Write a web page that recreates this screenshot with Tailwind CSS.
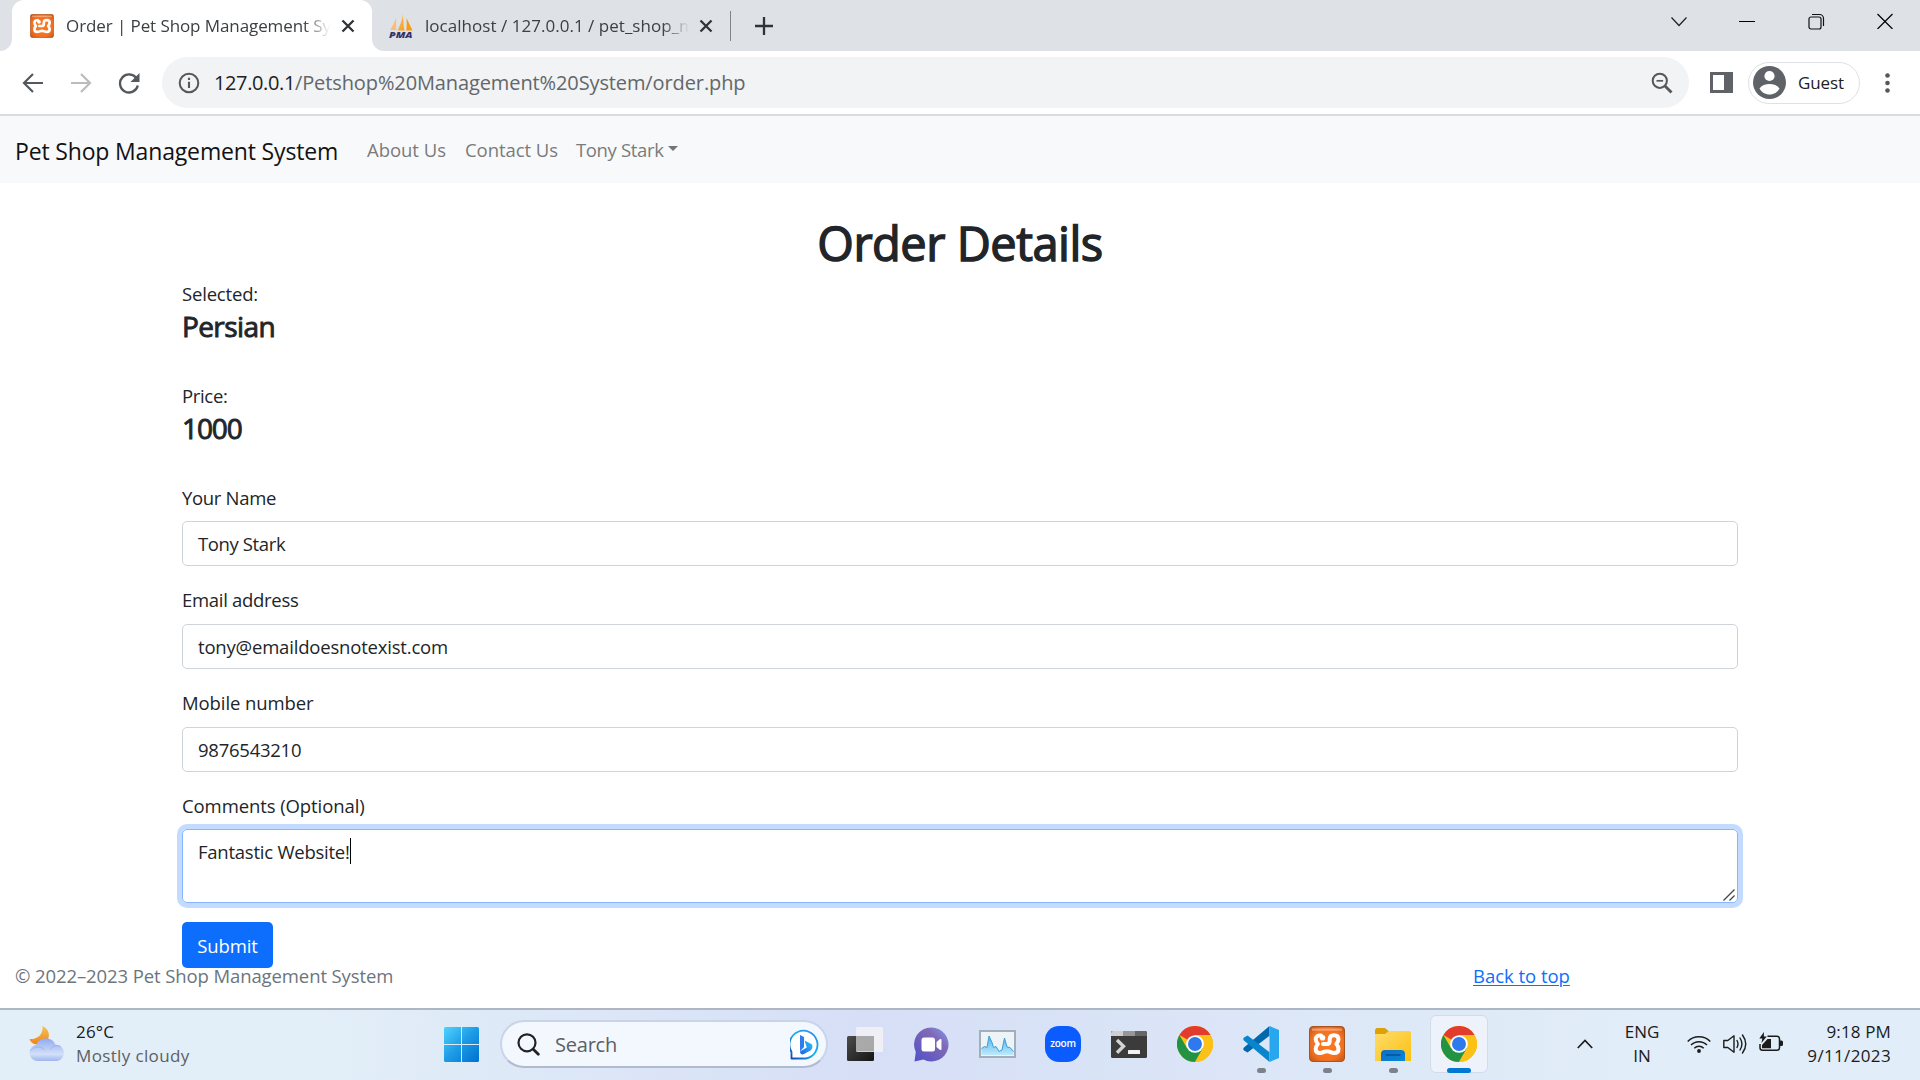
<!DOCTYPE html>
<html lang="en">
<head>
<meta charset="utf-8">
<title>Order | Pet Shop Management System</title>
<script src="https://cdn.jsdelivr.net/npm/@tailwindcss/browser@4"></script>
</head>
<body class="w-[1920px] h-[1080px] overflow-hidden bg-white text-[#212529] font-['Open_Sans','Noto_Sans',sans-serif]">
<svg class="absolute w-0 h-0">
  <defs>
    <linearGradient id="win" gradientUnits="userSpaceOnUse" x1="0" y1="0" x2="35" y2="35"><stop offset="0" stop-color="#4fd3fd"/><stop offset=".5" stop-color="#1c9be6"/><stop offset="1" stop-color="#0070cf"/></linearGradient>
    <linearGradient id="moon" x1="0" y1="0" x2="0" y2="1"><stop offset="0" stop-color="#f5c451"/><stop offset="1" stop-color="#f1821c"/></linearGradient>
    <linearGradient id="cloud" x1="0" y1="0" x2="0" y2="1"><stop offset="0" stop-color="#8faaf0"/><stop offset=".7" stop-color="#d3e0fa"/><stop offset="1" stop-color="#9eb5ee"/></linearGradient>
    <linearGradient id="bing" x1="1" y1="0" x2="0" y2="1"><stop offset="0" stop-color="#2a86ef"/><stop offset=".5" stop-color="#17b2ee"/><stop offset="1" stop-color="#153fb5"/></linearGradient>
    <linearGradient id="bingb" x1="1" y1="0" x2="0" y2="1"><stop offset="0" stop-color="#25c8f5"/><stop offset="1" stop-color="#2360e8"/></linearGradient>
    <linearGradient id="dark" x1="0" y1="0" x2="1" y2="1"><stop offset="0" stop-color="#4c4c4c"/><stop offset="1" stop-color="#151515"/></linearGradient>
    <linearGradient id="chat" x1="1" y1="0" x2="0" y2="1"><stop offset="0" stop-color="#7d9cf0"/><stop offset=".35" stop-color="#8068b4"/><stop offset="1" stop-color="#5050c8"/></linearGradient>
    <linearGradient id="fold" x1="0" y1="0" x2="1" y2="1"><stop offset="0" stop-color="#ffdd6c"/><stop offset="1" stop-color="#fbc011"/></linearGradient>
    <linearGradient id="blue" x1="0" y1="0" x2="1" y2="1"><stop offset="0" stop-color="#0c6fc4"/><stop offset="1" stop-color="#0a86d8"/></linearGradient>
    <radialGradient id="xam" cx=".5" cy=".5" r=".75"><stop offset="0" stop-color="#ff7a1e"/><stop offset=".6" stop-color="#f37021"/><stop offset="1" stop-color="#b24f14"/></radialGradient>
    <linearGradient id="sail" x1="0" y1="0" x2="1" y2="1"><stop offset="0" stop-color="#fbc27c"/><stop offset="1" stop-color="#f89c0e"/></linearGradient>
    <linearGradient id="perf" x1="0" y1="0" x2="0" y2="1"><stop offset="0" stop-color="#4eb5ec"/><stop offset="1" stop-color="#bfe8fb"/></linearGradient>
  </defs>
  <symbol id="xampp" viewBox="0 0 36 36">
    <rect x=".5" y=".5" width="35" height="35" rx="3.5" fill="url(#xam)" stroke="#a9541f"/>
    <path d="M3 2.500h30v2.200H3z" fill="#fff" opacity=".35"/>
    <path d="M12 9.500c-3.400-.6-5.300 1.300-5.300 3.800 0 2 .8 3.200 2.200 4.700-1.400 1.500-2.200 2.900-2.200 4.900 0 2.300 1.500 4 4.300 4 2.900 0 4-1.700 7-1.700s4.100 1.700 7 1.700c3 0 4.500-1.700 4.500-4 0-2-.8-3.400-2.200-4.900 1.400-1.500 2.200-2.700 2.200-4.700 0-2.300-1.500-4.100-4.500-4.100-2.700 0-4.300 1.500-4.300 4v1.800c0 1.800-1 3-2.600 3H14" fill="none" stroke="#fff" stroke-width="4" stroke-linecap="round" stroke-linejoin="round"/>
    <circle cx="13.500" cy="11.800" r="2.800" fill="#fff"/>
  </symbol>
  <symbol id="chrome" viewBox="0 0 48 48">
    <circle cx="24" cy="24" r="24" fill="#fbc116"/>
    <path d="M24 24 3.200 12A24 24 0 0 1 44.800 12H24z" fill="#e33b2e"/>
    <path d="M3.200 12A24 24 0 0 0 24 48L34.400 30 24 24 13.600 30z" fill="#229342"/>
    <path d="M24 48A24 24 0 0 0 44.800 12H24L34.400 30z" fill="#fbc116"/>
    <circle cx="24" cy="24" r="11.800" fill="#fff"/><circle cx="24" cy="24" r="9.300" fill="#2e79ee"/>
  </symbol>
</svg>

<!-- Browser tab strip -->
<div class="h-[51px] bg-[#dee1e6] flex items-stretch pl-3">
  <div class="relative w-[360px] bg-white rounded-t-xl flex items-center pl-[18px] pr-[17px]">
    <svg class="absolute -left-3 bottom-0 w-3 h-3" viewBox="0 0 12 12"><path d="M12 0v12H0A12 12 0 0 0 12 0z" fill="#fff"/></svg>
    <svg class="absolute -right-3 bottom-0 w-3 h-3" viewBox="0 0 12 12"><path d="M0 0v12h12A12 12 0 0 1 0 0z" fill="#fff"/></svg>
    <svg class="w-6 h-6 shrink-0"><use href="#xampp"/></svg>
    <span class="ml-3 w-[264px] shrink-0 overflow-hidden whitespace-nowrap text-[17px] tracking-[-0.09px] text-[#3c4043] mask-r-from-90% mask-r-to-100%">Order | Pet Shop Management System</span>
    <svg class="ml-[11px] w-[14px] h-[14px] shrink-0" viewBox="0 0 14 14"><path d="M1.500 1.500l11 11m0-11l-11 11" stroke="#303336" stroke-width="2.300"/></svg>
  </div>
  <div class="w-[358px] flex items-center pl-[17px]">
    <svg class="w-6 h-6 shrink-0 overflow-visible" viewBox="0 0 24 24"><path d="M7 3.500C5.500 9 3.500 12 1 16h6.500c-.9-4 0-8-.5-12.500z" fill="#fbbd76"/><path d="M13.500 0C14 5 11 11 8.500 16.500h7.200C13.800 12 15 5 13.500 0z" fill="url(#sail)"/><path d="M17.500 4c1.500 3 3.500 7.500 6 12.500h-6.300c.8-4.500.5-8 .3-12.500z" fill="#f89c0e"/><text x="0" y="23.600" textLength="23.500" lengthAdjust="spacingAndGlyphs" font-family="Open Sans" font-size="9.500" font-weight="800" font-style="italic" fill="#34346b">PMA</text></svg>
    <span class="ml-3 w-[264px] shrink-0 overflow-hidden whitespace-nowrap text-[17px] tracking-[0.03px] text-[#3c4043] mask-r-from-90% mask-r-to-100%">localhost / 127.0.0.1 / pet_shop_management</span>
    <svg class="ml-[10px] w-[14px] h-[14px] shrink-0" viewBox="0 0 14 14"><path d="M1.500 1.500l11 11m0-11l-11 11" stroke="#303336" stroke-width="2.300"/></svg>
  </div>
  <div class="flex items-center"><span class="w-px h-[30px] bg-[#80848a]"></span>
    <svg class="ml-6 w-[18px] h-[18px]" viewBox="0 0 18 18"><path d="M9 0v18M0 9h18" stroke="#303336" stroke-width="2.300"/></svg>
  </div>
  <div class="ml-auto flex items-start pt-[13px] pr-[27px] gap-[52.500px]">
    <svg class="w-4 h-4" viewBox="0 0 16 16"><path d="M.5 4.500L8 12.500l7.500-8" fill="none" stroke="#222" stroke-width="1.200"/></svg>
    <svg class="w-4 h-4" viewBox="0 0 16 16"><path d="M0 8.500h16" stroke="#000"/></svg>
    <svg class="w-[17px] h-[17px]" viewBox="0 0 17 17" fill="none" stroke="#111" stroke-width="1.200"><rect x="1" y="4" width="12" height="12" rx="2"/><path d="M4 1.500h7.500a4 4 0 0 1 4 4V13"/></svg>
    <svg class="w-4 h-4" viewBox="0 0 16 16"><path d="M.5 1l15 15m0-15l-15 15" stroke="#000" stroke-width="1.200"/></svg>
  </div>
</div>

<!-- Browser toolbar -->
<div class="h-[65px] bg-white border-b-2 border-[#dadce0] flex items-center pl-[22px] pr-[25px]">
  <svg class="w-[22px] h-[22px]" viewBox="0 0 22 22" fill="none" stroke="#54585d" stroke-width="2.200"><path d="M21 11H2.500M11 2l-9 9 9 9"/></svg>
  <svg class="ml-[26px] w-[22px] h-[22px]" viewBox="0 0 22 22" fill="none" stroke="#babcbe" stroke-width="2.200"><path d="M1 11h18.500M11 2l9 9-9 9"/></svg>
  <svg class="ml-[26px] w-[22px] h-[22px]" viewBox="0 0 22 22"><path d="M18.600 6.600A9 9 0 1 0 19.800 13.500" fill="none" stroke="#54585d" stroke-width="2.300"/><path d="M21.500 1v9h-9z" fill="#54585d"/></svg>
  <div class="ml-[22px] w-[1527px] h-[51px] rounded-full bg-[#f1f3f4] flex items-center pl-4 pr-4">
    <svg class="w-[22px] h-[22px]" viewBox="0 0 22 22"><circle cx="11" cy="11" r="9.300" fill="none" stroke="#54585d" stroke-width="2"/><path d="M11 9.700v6.300M11 5.800v2.100" stroke="#54585d" stroke-width="2.100"/></svg>
    <span class="ml-[14px] text-[20px] tracking-[-0.11px] text-[#63676b]"><span class="text-[#202124] tracking-[-0.38px]">127.0.0.1</span>/Petshop%20Management%20System/order.php</span>
    <svg class="ml-auto w-[22px] h-[22px]" viewBox="0 0 22 22" fill="none" stroke="#54585d"><circle cx="8.800" cy="8.800" r="7.100" stroke-width="2"/><path d="M5.500 8.800h6.600" stroke-width="1.700"/><path d="M14 14l6.500 6.500" stroke-width="2.800"/></svg>
  </div>
  <svg class="ml-[21px] w-[23px] h-[21px]" viewBox="0 0 23 21"><path fill-rule="evenodd" d="M0 0h23v21H0zM3 3v15h11V3z" fill="#5f6368"/></svg>
  <div class="ml-[15px] w-[112px] h-[42px] rounded-full border-[1.500px] border-[#dfe1e4] flex items-center pl-[4px]">
    <svg class="w-[33px] h-[33px]" viewBox="0 0 33 33"><circle cx="16.500" cy="16.500" r="16.500" fill="#5f6368"/><circle cx="16.500" cy="10" r="5.100" fill="#fff"/><path d="M6.500 22.500c2-3.200 6-4.600 10-4.600s8 1.400 10 4.600c-2 3.800-5.500 6-10 6s-8-2.200-10-6z" fill="#fff"/></svg>
    <span class="ml-3 text-[17px] tracking-[-0.1px] text-[#202124]">Guest</span>
  </div>
  <svg class="ml-auto w-[5px] h-[20px] mr-[5px]" viewBox="0 0 5 20" fill="#54585d"><circle cx="2.500" cy="2.500" r="2.300"/><circle cx="2.500" cy="10" r="2.300"/><circle cx="2.500" cy="17.500" r="2.300"/></svg>
</div>

<!-- Site navigation -->
<nav class="h-[67px] bg-[#f8f9fa] flex items-center pl-[15px] text-[18.500px] text-[#7a7b7c]">
  <a class="w-[323px] pt-[3px] text-[23px] tracking-[-0.16px] text-[#121212] whitespace-nowrap">Pet Shop Management System</a>
  <a class="ml-[29px] w-[79px] tracking-[-0.03px] whitespace-nowrap">About Us</a>
  <a class="ml-[19px] w-[93px] tracking-[-0.06px] whitespace-nowrap">Contact Us</a>
  <a class="ml-[18px] flex items-center tracking-[-0.35px] whitespace-nowrap">Tony Stark<svg class="ml-[4px] -mt-[2px] w-[10px] h-[5px]" viewBox="0 0 10 5"><path d="M0 0h10L5 5z" fill="#747576"/></svg></a>
</nav>

<!-- Order form -->
<main class="h-[825px] px-[182px] pt-[30px] text-[18.500px] leading-[29px]">
  <h1 class="h-[58px] leading-[60px] text-center text-[47px] font-normal tracking-[-0.5px] [-webkit-text-stroke:1.4px_#212529]">Order Details</h1>
  <div class="mt-[8px] h-[102px]">
    <p class="tracking-[-0.18px]">Selected:</p>
    <h4 class="leading-[36px] text-[28px] font-normal tracking-[-0.6px] [-webkit-text-stroke:0.9px_#212529]">Persian</h4>
  </div>
  <div class="h-[102px]">
    <p class="tracking-[-0.33px]">Price:</p>
    <h4 class="leading-[36px] text-[28px] font-normal tracking-[-1.1px] [-webkit-text-stroke:0.9px_#212529]">1000</h4>
  </div>
  <div class="h-[102px]">
    <label class="block tracking-[-0.32px]">Your Name</label>
    <div class="mt-[9px] h-[45px] rounded-[5px] border border-[#ced4da] px-[15px] leading-[44px] tracking-[-0.38px]">Tony Stark</div>
  </div>
  <div class="h-[103px]">
    <label class="block tracking-[-0.3px]">Email address</label>
    <div class="mt-[10px] h-[45px] rounded-[5px] border border-[#ced4da] px-[15px] leading-[44px] tracking-[-0.19px]">tony@emaildoesnotexist.com</div>
  </div>
  <div class="h-[103px]">
    <label class="block tracking-[-0.09px]">Mobile number</label>
    <div class="mt-[10px] h-[45px] rounded-[5px] border border-[#ced4da] px-[15px] leading-[44px] tracking-[-0.25px]">9876543210</div>
  </div>
  <label class="block tracking-[-0.09px]">Comments (Optional)</label>
  <div class="relative mt-[9px] h-[74px] rounded-[5px] border border-[#86b7fe] ring-[5px] ring-[#c2dbfe] px-[15px] pt-[7px] flex items-start tracking-[-0.24px]">
    <span>Fantastic Website!</span><span class="mt-px w-px h-[26px] bg-black"></span>
    <svg class="absolute right-[2px] bottom-[1px] w-[12px] h-[12px]" viewBox="0 0 12 12"><path d="M.5 11.500l11-11M6.500 11.500l5-5" stroke="#444" stroke-width="1.300"/></svg>
  </div>
  <button class="mt-[19px] block w-[91px] h-[46px] rounded-[5px] bg-[#0d6efd] text-white leading-[48px] text-center tracking-[-0.1px]">Submit</button>
  <footer class="relative -mt-[7px] -ml-[167px] flex leading-[29px]">
    <span class="w-[1458px] text-[#6c757d] tracking-[-0.1px]">© 2022–2023 Pet Shop Management System</span>
    <a class="text-[#0d6efd] underline underline-offset-[2px] decoration-1 tracking-[-0.03px]">Back to top</a>
  </footer>
</main>

<!-- Taskbar -->
<div class="h-[72px] pb-[2px] border-t-2 border-[#adb6c2] flex items-center bg-linear-to-r from-[#e3eff8] from-15% via-[#d6dff6] via-45% to-[#e1edf8] to-85% text-[17px] leading-6 text-[#1b1b1b]">
  <svg class="ml-7 w-[38px] h-[36px]" viewBox="0 0 38 36"><path d="M14.500 0c5 2.500 7.500 7 6 12-2 6-9 8-14 6C4 17 2 15.500 1.500 13c6 .8 14-3 13-13z" fill="url(#moon)"/><path d="M9 35a8.200 8.200 0 0 1-.5-16.300C10 14.500 14 12.500 18 12.500c4.800 0 8.200 2.700 9.500 6.200A8.200 8.200 0 0 1 29 35z" fill="url(#cloud)"/><path d="M2 25c4-5 11-5 15-1M22 24c2-4 8-6 11-3" fill="none" stroke="#86a0e6" stroke-opacity=".5"/></svg>
  <div class="ml-[10px] w-[367px]"><div class="tracking-[0.2px]">26°C</div><div class="text-[#5c6065] tracking-[0.36px]">Mostly cloudy</div></div>
  <svg class="ml-[1px] w-[35px] h-[35px]" viewBox="0 0 35 35"><path d="M1.500 0H17v17H0V1.500A1.500 1.500 0 0 1 1.500 0zM18 0h15.500A1.500 1.500 0 0 1 35 1.500V17H18zM0 18h17v17H1.500A1.500 1.500 0 0 1 0 33.500zM18 18h17v15.500a1.500 1.500 0 0 1-1.500 1.500H18z" fill="url(#win)"/></svg>
  <div class="ml-[21px] w-[328px] h-[48px] rounded-full bg-[#f3f7fe] border-2 border-[#c9d4ea] border-b-[#b0bbd0] flex items-center pl-[15px]">
    <svg class="w-[23px] h-[23px]" viewBox="0 0 23 23" fill="none" stroke="#222" stroke-linecap="round"><circle cx="10" cy="9.800" r="8.500" stroke-width="2.200"/><path d="M16.500 16.500l4.800 4.800" stroke-width="2.800"/></svg>
    <span class="ml-[15px] pt-[2px] text-[20px] tracking-[-0.22px] text-[#5d5f63]">Search</span>
    <svg class="ml-auto mr-[5px] w-[31px] h-[31px]" viewBox="0 0 31 31"><path d="M1.500 29.500V23A14 14 0 1 1 16 29.500H9z" fill="#fff" stroke="url(#bing)" stroke-width="1.800" stroke-linejoin="round"/><path d="M10 6l4 2v10l-4 4.500z" fill="#2f7bf0"/><path d="M14.500 11.500l6.500 3.200c2 1 2 5-.5 6.800L14 25c-2.500 1.200-4-.5-4-2.500l6.800-4z" fill="url(#bingb)"/></svg>
  </div>
  <div class="ml-1 flex h-full">
    <div class="w-[66px] flex items-center justify-center"><svg class="w-[36px] h-[35px]" viewBox="0 0 36 35"><rect y="9" width="27" height="25" rx="1.500" fill="url(#dark)"/><rect x="9" y="0" width="27" height="25" rx="1.500" fill="#f4f4f4" fill-opacity=".82"/><path d="M9 9h18v15H9z" fill="#8f8f8f" fill-opacity=".6"/></svg></div>
    <div class="w-[66px] flex items-center justify-center"><svg class="w-[35px] h-[35px]" viewBox="0 0 35 35"><path d="M17.500.5a17 17 0 1 1-8 32L.5 34.500 1.800 25A17 17 0 0 1 17.500.5z" fill="url(#chat)"/><rect x="7.500" y="10.500" width="13.500" height="14" rx="2.500" fill="#fff"/><path d="M22.500 15l3.300-2.700c.7-.5 1.700-.1 1.700.8v8.800c0 .9-1 1.300-1.700.8L22.500 20z" fill="#fff"/></svg></div>
    <div class="w-[66px] flex items-center justify-center"><svg class="w-[37px] h-[28px]" viewBox="0 0 37 28"><rect x="1" y="1" width="35" height="26" fill="#eef3f6" stroke="#9fb0ba" stroke-width="2"/><path d="M2.500 25v-6.500l3-2L8 17.500 10 6l3 6.500 1.500 5 2.500-1 3 5 3-1.500L25.500 8l2.500 9 3 .5 3.500 4V25z" fill="url(#perf)"/><path d="M2.500 18.500l3-2L8 17.500 10 6l3 6.500 1.500 5 2.500-1 3 5 3-1.500L25.500 8l2.500 9 3 .5 3.500 4" fill="none" stroke="#389fd8"/></svg></div>
    <div class="w-[66px] flex items-center justify-center"><div class="w-9 h-9 rounded-[14px] bg-[#0b5cff] text-white text-[10px] leading-[34px] text-center font-semibold tracking-[-0.2px]">zoom</div></div>
    <div class="w-[66px] flex items-center justify-center"><svg class="w-9 h-[27px]" viewBox="0 0 36 27"><rect width="36" height="27" rx="1.500" fill="#3b3b3b"/><path d="M1.500 0H12v5H0V1.500z" fill="#cfcfcf"/><path d="M12 0h12v5H12z" fill="#979797"/><path d="M24 0h10.500L36 1.500V5H24z" fill="#666"/><path d="M6 9l6.500 6.300L6 21.800" fill="none" stroke="#d3d3d3" stroke-width="3.400"/><rect x="17" y="19" width="12" height="4" rx=".5" fill="#f2f2f2"/></svg></div>
    <div class="w-[66px] flex items-center justify-center"><svg class="w-9 h-9"><use href="#chrome"/></svg></div>
    <div class="relative w-[66px] flex items-center justify-center"><svg class="w-9 h-9" viewBox="0 0 36 36"><path d="M26.500 0v9.800L4.500 26.600 1 24.500q-1.500-1.500 0-3z" fill="#0069ad"/><path d="M26.500 36v-9.800L4.500 9.400 1 11.500q-1.500 1.500 0 3z" fill="#0885cc"/><path d="M26.500 0L36 4v28l-9.500 4z" fill="#29a7ee"/></svg><span class="absolute bottom-[5px] w-[9px] h-[5px] rounded-full bg-[#7d818a]"></span></div>
    <div class="relative w-[66px] flex items-center justify-center"><svg class="w-9 h-9"><use href="#xampp"/></svg><span class="absolute bottom-[5px] w-[9px] h-[5px] rounded-full bg-[#7d818a]"></span></div>
    <div class="relative w-[66px] flex items-center justify-center"><svg class="w-9 h-[33px]" viewBox="0 0 36 33"><path d="M1.500 0H10l4 3.500L10 8H0V1.500z" fill="#dda209"/><path d="M0 6h10l4-3h20.500L36 4.500V33H0z" fill="url(#fold)"/><path d="M6 33V26a4 4 0 0 1 4-4h16a4 4 0 0 1 4 4v7z" fill="url(#blue)"/><path d="M10.500 27h15" stroke="#064a8c" stroke-width="1.300"/></svg><span class="absolute bottom-[5px] w-[9px] h-[5px] rounded-full bg-[#7d818a]"></span></div>
    <div class="relative w-[66px] flex items-center justify-center"><div class="w-[58px] h-[58px] rounded-md bg-[#eef2fb] border border-[#d3dae9] flex items-center justify-center"><svg class="w-9 h-9"><use href="#chrome"/></svg></div><span class="absolute bottom-[5px] w-6 h-[5px] rounded-full bg-[#0078d4]"></span></div>
  </div>
  <svg class="ml-[85px] w-4 h-[10px]" viewBox="0 0 16 10"><path d="M.8 9L8 1.500 15.200 9" fill="none" stroke="#1b1b1b" stroke-width="1.700"/></svg>
  <div class="ml-[26px] w-[46px] text-center"><div>ENG</div><div>IN</div></div>
  <svg class="ml-[22px] w-[24px] h-[18px]" viewBox="0 0 24 18" fill="none" stroke="#1b1b1b" stroke-width="1.500"><path d="M.7 6.500a16 16 0 0 1 22.600 0M4 10a11.300 11.300 0 0 1 16 0M7.300 13.300a6.600 6.600 0 0 1 9.400 0"/><circle cx="12" cy="16" r="1.900" fill="#1b1b1b" stroke="none"/></svg>
  <svg class="ml-3 w-[24px] h-[20px]" viewBox="0 0 24 20" fill="none" stroke="#1b1b1b" stroke-width="1.400"><path d="M.8 6.500h4L11 1.800v16.400l-6.200-4.700h-4zM14 6.500q2 3.500 0 7M17 4q3.800 6 0 12M19.500 1q6.500 9 0 18" stroke-linejoin="round" stroke-linecap="round"/></svg>
  <svg class="ml-3 w-[24px] h-[20px] -mt-1" viewBox="0 0 24 20"><path d="M8.500 4.300h9.500a2.500 2.500 0 0 1 2.500 2.500v9a2.500 2.500 0 0 1-2.500 2.500H3.500A2.500 2.500 0 0 1 1 15.800V12" fill="none" stroke="#1b1b1b" stroke-width="1.500"/><path d="M3 16.200V13l5.500-6H12v9.200zM21 8.500h1.500q1.500 0 1.500 1.500v2.500q0 1.500-1.500 1.500H21zM5 0L.3 6.500h3L2.500 11 7.700 4.500H4.800z" fill="#1b1b1b"/></svg>
  <div class="ml-auto mr-[29px] text-right"><div class="tracking-[0.15px]">9:18 PM</div><div class="tracking-[0.35px]">9/11/2023</div></div>
</div>
</body>
</html>
